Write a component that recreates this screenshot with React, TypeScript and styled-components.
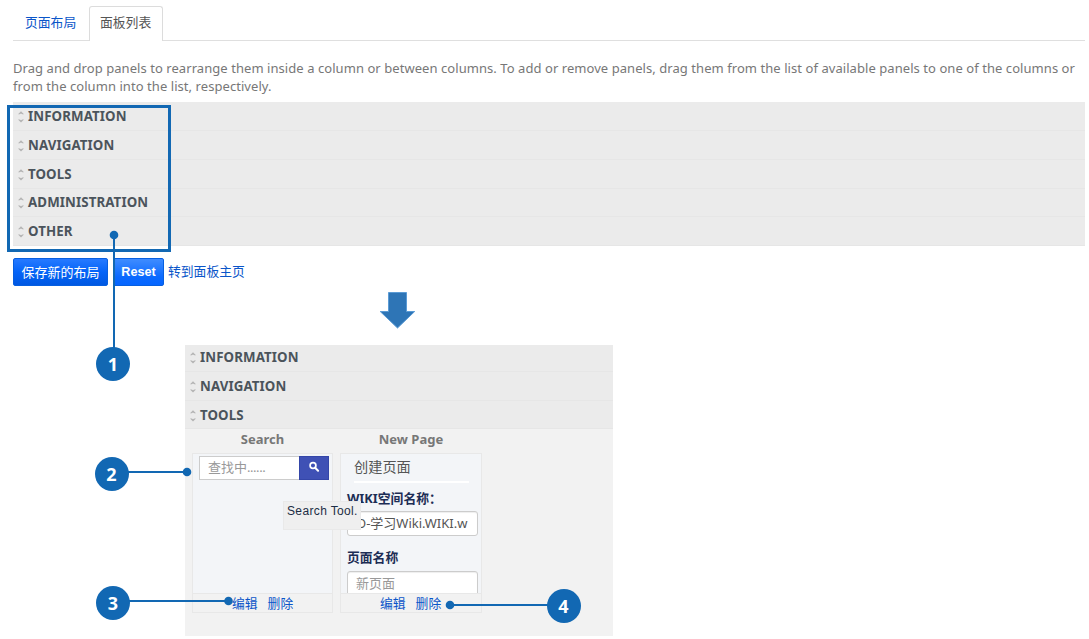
import React from 'react';
import styled, { createGlobalStyle, css } from 'styled-components';

const BLUE = '#1268b3';

const GlobalStyle = createGlobalStyle`
  * { box-sizing: border-box; }
  body {
    margin: 0;
    background: #fff;
    font-family: 'Noto Sans', 'Noto Sans CJK SC', sans-serif;
    font-size: 13px;
    color: #777;
    overflow: hidden;
  }
`;

const Page = styled.main`
  position: relative;
  width: 1089px;
  height: 639px;
  padding: 6px 4px 0 13px;
  overflow: hidden;
`;

const Tabs = styled.nav`
  display: flex;
  height: 35px;
  border-bottom: 1px solid #dfdfdf;
`;

const Tab = styled.a<{ $active?: boolean }>`
  height: 35px;
  width: ${p => (p.$active ? 74 : 76)}px;
  padding-left: ${p => (p.$active ? 10 : 12)}px;
  font-size: 12.8px;
  line-height: 33px;
  white-space: nowrap;
  color: ${p => (p.$active ? '#555' : '#0a55c9')};
  ${p => p.$active && css`
    background: #fff;
    border: 1px solid #dcdcdc;
    border-bottom: 0;
    border-radius: 3px 3px 0 0;
    line-height: 31px;
  `}
`;

const Intro = styled.p`
  margin: 18px 0 0;
  height: 43px;
  line-height: 18px;
  font-size: 13px;
  white-space: nowrap;
`;

const IntroLine = styled.span`
  display: block;
  width: max-content;
  letter-spacing: 0.06px;
`;

const Categories = styled.section`
  background: #ebebeb;
`;

const CategoryRow = styled.div<{ $height: number; $lift?: number }>`
  display: flex;
  align-items: center;
  height: ${p => p.$height}px;
  padding: 0 0 ${p => p.$lift ?? 0}px 4px;
  gap: 3px;
  border-bottom: 1px solid #e6e6e6;
  font-size: 13.3px;
  font-weight: 700;
  color: #4b545c;
`;

const CategoryName = styled.span`
  line-height: 18px;
  letter-spacing: 0.1px;
`;

const Actions = styled.div`
  display: flex;
  margin-top: 12px;
  height: 28px;
`;

const ActionButton = styled.button<{ $width: number; $bright?: boolean }>`
  width: ${p => p.$width}px;
  height: 28px;
  margin-right: ${p => (p.$bright ? 4 : 5)}px;
  padding: 0 0 1px;
  border: 1px solid #075fe0;
  border-radius: 2px;
  background: ${p => (p.$bright
    ? 'linear-gradient(#3f8cff, #0a69ff 70%, #0565ff)'
    : 'linear-gradient(#267aff, #0564f8 50%, #0058e2)')};
  color: #fff;
  font: ${p => (p.$bright ? '700 12.6px' : '400 13px')} 'Liberation Sans', 'Noto Sans CJK SC', sans-serif;
  white-space: nowrap;
`;

const HomeLink = styled.a`
  color: #0a55c9;
  font-size: 12.8px;
  line-height: 26px;
`;

const Arrow = styled.svg`
  display: block;
  margin: 6px 0 0 366px;
`;

const Detail = styled.section`
  width: 428px;
  height: 291px;
  margin: 15px 0 0 172px;
  background: #f2f2f2;
`;

const Cards = styled.div`
  display: flex;
  gap: 7px;
  padding-left: 7px;
`;

const CardColumn = styled.div<{ $width: number }>`
  width: ${p => p.$width}px;
`;

const CardTitle = styled.h3`
  height: 24px;
  margin: 0;
  line-height: 20px;
  font-size: 13px;
  text-align: center;
  color: #777;
`;

const Card = styled.div`
  display: flex;
  flex-direction: column;
  height: 160px;
  border: 1px solid #e8e8e8;
`;

const CardBody = styled.div`
  height: 140px;
  padding: 0 6px;
  overflow: hidden;
  background: #f3f5f8;
`;

const CardFooter = styled.div`
  display: flex;
  gap: 10px;
  height: 19px;
  padding-left: 39px;
  border-top: 1px solid #e8e8e8;
  line-height: 18px;
  font-size: 12.8px;
  color: #0a55c9;
`;

const SearchBar = styled.div`
  display: flex;
  width: 130px;
  height: 24px;
  margin-top: 2px;
`;

const SearchField = styled.div`
  width: 100px;
  padding-left: 8px;
  border: 1px solid #ccc;
  border-right: 0;
  background: #fff;
  color: #999;
  line-height: 21px;
`;

const Dots = styled.span`
  letter-spacing: -0.45px;
`;

const SearchButton = styled.button`
  display: grid;
  place-items: center;
  width: 30px;
  height: 24px;
  padding: 0 0 2px;
  border: 1px solid #3446a8;
  background: #3f51b5;
`;

const FormTitle = styled.div`
  height: 29px;
  margin: 0 6px 0 7px;
  border-bottom: 2px solid #fff;
  font-size: 14.2px;
  line-height: 25px;
  color: #555;
`;

const Label = styled.div<{ $gap: number }>`
  height: 18px;
  margin-top: ${p => p.$gap}px;
  font-size: 12.8px;
  font-weight: 700;
  line-height: 18px;
  color: #1c2d55;
  white-space: nowrap;
`;

const Field = styled.div<{ $placeholder?: boolean }>`
  width: 131px;
  height: 25px;
  margin-top: ${p => (p.$placeholder ? 5 : 4)}px;
  padding: 0 8px;
  border: 1px solid #ccc;
  border-radius: 3px;
  background: #fff;
  box-shadow: inset 0 1px 1px rgba(0, 0, 0, 0.07);
  line-height: 22px;
  white-space: nowrap;
  color: ${p => (p.$placeholder ? '#999' : '#555')};
`;

const Tooltip = styled.div`
  position: absolute;
  left: 283px;
  top: 501px;
  width: 78px;
  height: 29px;
  padding-left: 3px;
  border: 1px solid #e9e9e9;
  background: #efefef;
  color: #1c2d45;
  font: 12px/19px 'Liberation Sans', sans-serif;
  letter-spacing: 0.36px;
  white-space: nowrap;
`;

const Frame = styled.div`
  position: absolute;
  left: 7px;
  top: 105px;
  width: 164px;
  height: 147px;
  border: 3px solid ${BLUE};
`;

const Connectors = styled.svg`
  position: absolute;
  inset: 0;
  pointer-events: none;
`;

const Marker = styled.div<{ $x: number; $y: number }>`
  position: absolute;
  left: ${p => p.$x - 17}px;
  top: ${p => p.$y - 17}px;
  width: 34px;
  height: 34px;
  border-radius: 50%;
  background: ${BLUE};
  color: #fff;
  font: 700 18px/35px 'Noto Sans', sans-serif;
  text-align: center;
`;

const SortGlyph = styled.svg`
  position: relative;
  top: 1px;
`;

const SortIcon = () => (
  <SortGlyph width="8" height="14" viewBox="0 0 8 14" fill="#b4b4b4">
    <path d="M1 4.2 4 1.2l3 3H5.2L4 3.4l-1.2.8zM1 9.5h1.8l1.2.8 1.2-.8H7l-3 3z" />
  </SortGlyph>
);

const MagnifierIcon = () => (
  <svg width="12" height="12" viewBox="0 0 12 12" fill="none" stroke="#fff">
    <circle cx="5" cy="4.5" r="2.9" strokeWidth="1.7" />
    <path d="m7.1 6.8 3 3" strokeWidth="2" strokeLinecap="round" />
  </svg>
);

interface Category { name: string; height: number; lift?: number }

const categories: Category[] = [
  { name: 'INFORMATION', height: 29 },
  { name: 'NAVIGATION', height: 29 },
  { name: 'TOOLS', height: 29 },
  { name: 'ADMINISTRATION', height: 28, lift: 1 },
  { name: 'OTHER', height: 29 },
];

const detailCategories: Category[] = [
  { name: 'INFORMATION', height: 27, lift: 3 },
  { name: 'NAVIGATION', height: 29 },
  { name: 'TOOLS', height: 28 },
];

const markers = [
  { n: 1, x: 113, y: 364 },
  { n: 2, x: 111.5, y: 474 },
  { n: 3, x: 113, y: 603 },
  { n: 4, x: 563.5, y: 605.5 },
];

const CategoryList = ({ items }: { items: Category[] }) => (
  <Categories>
    {items.map(c => (
      <CategoryRow key={c.name} $height={c.height} $lift={c.lift}>
        <SortIcon />
        <CategoryName>{c.name}</CategoryName>
      </CategoryRow>
    ))}
  </Categories>
);

export default function App() {
  return (
    <>
      <GlobalStyle />
      <Page>
        <Tabs>
          <Tab>页面布局</Tab>
          <Tab $active>面板列表</Tab>
        </Tabs>
        <Intro>
          <IntroLine>Drag and drop panels to rearrange them inside a column or between columns. To add or remove panels, drag them from the list of available panels to one of the columns or</IntroLine>
          <IntroLine>from the column into the list, respectively.</IntroLine>
        </Intro>
        <CategoryList items={categories} />
        <Actions>
          <ActionButton $width={95}>保存新的布局</ActionButton>
          <ActionButton $width={51} $bright>Reset</ActionButton>
          <HomeLink>转到面板主页</HomeLink>
        </Actions>
        <Arrow width="37" height="38" viewBox="0 0 37 38">
          <path d="M9.5.5h18v19h8.2L18.5 36 1.2 19.5h8.3z" fill="#2e75b6" stroke="#5b9bd5" />
        </Arrow>
        <Detail>
          <CategoryList items={detailCategories} />
          <Cards>
            <CardColumn $width={141}>
              <CardTitle>Search</CardTitle>
              <Card>
                <CardBody>
                  <SearchBar>
                    <SearchField>查找中<Dots>......</Dots></SearchField>
                    <SearchButton><MagnifierIcon /></SearchButton>
                  </SearchBar>
                </CardBody>
                <CardFooter><span>编辑</span><span>删除</span></CardFooter>
              </Card>
            </CardColumn>
            <CardColumn $width={142}>
              <CardTitle>New Page</CardTitle>
              <Card>
                <CardBody>
                  <FormTitle>创建页面</FormTitle>
                  <Label $gap={6}>WIKI空间名称：</Label>
                  <Field>O-学习Wiki.WIKI.w</Field>
                  <Label $gap={12}>页面名称</Label>
                  <Field $placeholder>新页面</Field>
                </CardBody>
                <CardFooter><span>编辑</span><span>删除</span></CardFooter>
              </Card>
            </CardColumn>
          </Cards>
        </Detail>
        <Tooltip>Search Tool.</Tooltip>
        <Frame />
        <Connectors width="1089" height="639" stroke={BLUE} strokeWidth="2" fill={BLUE}>
          <path d="M114 235V350M125 472H187M128 601H228M450 605H550" />
          <g stroke="none">
            <circle cx="114" cy="235" r="4.3" />
            <circle cx="187" cy="472" r="4.3" />
            <circle cx="228.5" cy="601" r="4.3" />
            <circle cx="450" cy="605" r="4.3" />
          </g>
        </Connectors>
        {markers.map(m => <Marker key={m.n} $x={m.x} $y={m.y}>{m.n}</Marker>)}
      </Page>
    </>
  );
}
